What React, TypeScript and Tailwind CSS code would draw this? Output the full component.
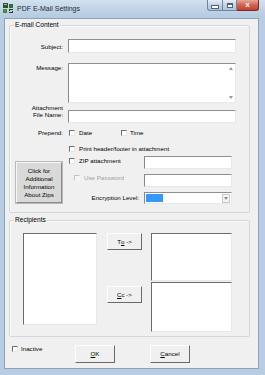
import React from "react";

const txt = "text-[6.2px] leading-[8px] text-black";
const field =
  "bg-white border border-t-[#8e8f8f] border-l-[#7f8a96] border-r-[#e3e9ef] border-b-[#e3e9ef]";
const sunken =
  "bg-white border border-t-[#6b6b6b] border-l-[#6b6b6b] border-r-[#e8e8e8] border-b-[#e8e8e8]";
const raised =
  "flex items-center justify-center bg-[#f0f0f0] border border-t-[#fdfdfd] border-l-[#fdfdfd] border-r-[#696969] border-b-[#696969] text-[6.2px] text-black";

function Check({ disabled = false }: { disabled?: boolean }) {
  return (
    <span
      className={`block h-[6px] w-[6px] shrink-0 border ${
        disabled
          ? "border-t-[#c4c4c4] border-l-[#c4c4c4] border-r-[#f4f4f4] border-b-[#f4f4f4] bg-[#f4f4f4]"
          : "border-t-[#6f6f6f] border-l-[#6f6f6f] border-r-[#e6e6e6] border-b-[#e6e6e6] bg-white"
      }`}
    />
  );
}

function Group({
  title,
  className,
  children,
}: {
  title: string;
  className: string;
  children: React.ReactNode;
}) {
  return (
    <div
      className={`relative rounded-[2px] border border-[#d2d8de] shadow-[inset_1px_1px_0_#fbfbfb] ${className}`}
    >
      {/* legend sits on the border line */}
      <span className="absolute left-[4px] top-[-5px] bg-[#f0f0f0] px-[1px] text-[6.6px] leading-[8px] text-black">
        {title}
      </span>
      {children}
    </div>
  );
}

function TitleBar() {
  return (
    <div className="flex h-[18px] items-start bg-[linear-gradient(180deg,#d3e1ee_0%,#c0d3e6_55%,#b5cae0_100%)]">
      <svg width="11" height="11" viewBox="0 0 11 11" className="ml-[3px] mt-[3px]">
        <rect x="0" y="0" width="5" height="5" fill="#3a4a3a" />
        <rect x="1" y="1" width="3" height="1" fill="#a6c86e" />
        <rect x="6" y="1" width="4" height="4" fill="#2f6f3a" />
        <rect x="0" y="6" width="4" height="4" fill="#4a8a3a" />
        <path d="M6 6h4v1H7v1h3v2H6V9h3V8H6z" fill="#2a3a2a" />
      </svg>
      <span className="ml-[3px] mt-[4px] font-['Liberation_Sans'] text-[7px] leading-[9px] text-[#1e2b38]">
        PDF E-Mail Settings
      </span>
      <div className="ml-auto mr-[6px] flex">
        <div className="flex h-[11px] w-[16px] items-center justify-center rounded-bl-[3px] border border-t-0 border-[#6d87a3] bg-[linear-gradient(180deg,#e4edf6,#c3d4e6_50%,#aec4dc)]">
          <span className="mt-[3px] block h-[2px] w-[6px] bg-white shadow-[0_0_0_1px_#4f647b]" />
        </div>
        <div className="flex h-[11px] w-[14px] items-center justify-center border border-l-0 border-t-0 border-[#6d87a3] bg-[linear-gradient(180deg,#e4edf6,#c3d4e6_50%,#aec4dc)]">
          <span className="block h-[5px] w-[6px] border border-t-2 border-[#4f647b] bg-white" />
        </div>
        <div className="flex h-[11px] w-[22px] items-center justify-center rounded-br-[3px] border border-l-0 border-t-0 border-[#7a2a22] bg-[linear-gradient(180deg,#e6a597,#d4624f_50%,#c2402e)]">
          <span className="text-[8px] font-bold leading-[8px] text-white">x</span>
        </div>
      </div>
    </div>
  );
}

export default function App() {
  return (
    <div className="flex h-[375px] w-[265px] flex-col bg-[#b8cde2] font-['Liberation_Sans',sans-serif]">
      <TitleBar />
      <div className="flex flex-1 pb-[6px] pl-[4px] pr-[6px]">
        <div className="flex flex-1 flex-col border border-[#8ba3bb] bg-[#f0f0f0]">
          {/* E-mail Content */}
          <Group title="E-mail Content" className="ml-[4px] mt-[6px] h-[188px] w-[241px]">
            <div className="flex flex-col pt-[13px]">
              <div className="flex">
                <span className={`${txt} w-[53px] pt-[4px] text-right`}>Subject:</span>
                <div className={`${field} ml-[5px] h-[14px] w-[168px]`} />
              </div>

              <div className="mt-[10px] flex">
                <span className={`${txt} w-[53px] pt-[1px] text-right`}>Message:</span>
                <div className={`${field} ml-[5px] flex h-[40px] w-[168px] justify-end`}>
                  <div className="flex w-[8px] flex-col items-center justify-between py-[3px]">
                    <svg width="4" height="3" viewBox="0 0 4 3">
                      <path d="M0 3L2 0L4 3z" fill="#9a9a9a" />
                    </svg>
                    <svg width="4" height="3" viewBox="0 0 4 3">
                      <path d="M0 0L2 3L4 0z" fill="#9a9a9a" />
                    </svg>
                  </div>
                </div>
              </div>

              <div className="mt-[1px] flex">
                <span className="w-[53px] text-right text-[6.2px] leading-[7px] text-black">
                  Attachment
                  <br />
                  File Name:
                </span>
                <div className={`${field} ml-[5px] mt-[6px] h-[13px] w-[168px]`} />
              </div>

              <div className="mt-[6px] flex h-[8px] items-center">
                <span className={`${txt} w-[53px] text-right`}>Prepend:</span>
                <div className="ml-[6px] flex items-center">
                  <Check />
                  <span className={`${txt} ml-[4px] w-[42px]`}>Date</span>
                  <Check />
                  <span className={`${txt} ml-[3px]`}>Time</span>
                </div>
              </div>

              <div className="ml-[59px] mt-[8px] flex h-[8px] items-center">
                <Check />
                <span className={`${txt} ml-[4px]`}>Print header/footer in attachment</span>
              </div>

              <div className="mt-[3px] flex">
                <div className="ml-[6px] mt-[6px] flex h-[41px] w-[46px] items-center justify-center border border-t-[#f6f6f6] border-l-[#f6f6f6] border-r-[#8a8a8a] border-b-[#8a8a8a] bg-[#d9d9d9] text-center text-[6.2px] leading-[8px] text-black shadow-[0_0_0_1px_#b9b9b9]">
                  Click for
                  <br />
                  Additional
                  <br />
                  Information
                  <br />
                  About Zips
                </div>
                <div className="ml-[6px] flex flex-col">
                  <div className="flex h-[13px]">
                    <div className="flex h-[8px] w-[76px] items-center pl-[1px] pt-[1px]">
                      <Check />
                      <span className={`${txt} ml-[4px]`}>ZIP attachment</span>
                    </div>
                    <div className={`${field} h-[13px] w-[88px]`} />
                  </div>
                  <div className="mt-[5px] flex h-[13px]">
                    <div className="flex h-[8px] w-[76px] items-center pl-[6px]">
                      <Check disabled />
                      <span className="ml-[4px] text-[6.2px] leading-[8px] text-[#a0a0a0]">
                        Use Password
                      </span>
                    </div>
                    <div className={`${field} h-[13px] w-[88px]`} />
                  </div>
                  <div className="mt-[5px] flex h-[12px] items-center">
                    <span className={`${txt} w-[71px] text-right`}>Encryption Level:</span>
                    <div className={`${field} ml-[5px] flex h-[12px] w-[88px] items-center`}>
                      <span className="ml-[1px] block h-[8px] w-[17px] bg-[#3399ff]" />
                      <div className="ml-auto mr-[1px] flex h-[9px] w-[8px] items-center justify-center border border-[#c9c9c9] bg-[#f4f4f4]">
                        <svg width="4" height="3" viewBox="0 0 4 3">
                          <path d="M0 0L2 3L4 0z" fill="#8a8a8a" />
                        </svg>
                      </div>
                    </div>
                  </div>
                </div>
              </div>
            </div>
          </Group>

          {/* Recipients */}
          <Group title="Recipients" className="ml-[4px] mt-[7px] h-[117px] w-[241px]">
            <div className="flex pl-[13px] pt-[12px]">
              <div className={`${sunken} h-[92px] w-[74px]`} />
              <div className="ml-[10px] flex w-[35px] flex-col">
                <button type="button" className={`${raised} h-[17px] w-[35px]`}>
                  T<span className="underline">o</span>&nbsp;-&gt;
                </button>
                <button type="button" className={`${raised} mt-[36px] h-[17px] w-[35px]`}>
                  <span className="underline">C</span>c&nbsp;-&gt;
                </button>
              </div>
              <div className="ml-[9px] flex flex-col">
                <div className={`${sunken} h-[48px] w-[81px]`} />
                <div className={`${sunken} mt-[1px] h-[50px] w-[81px]`} />
              </div>
            </div>
          </Group>

          {/* bottom buttons */}
          <div className="mt-[8px] flex items-start">
            <div className="flex w-[70px] items-center pl-[7px]">
              <Check />
              <span className={`${txt} ml-[3px]`}>Inactive</span>
            </div>
            <button type="button" className={`${raised} h-[18px] w-[40px]`}>
              <span className="underline">O</span>K
            </button>
            <button type="button" className={`${raised} ml-[35px] h-[18px] w-[40px]`}>
              <span className="underline">C</span>ancel
            </button>
          </div>
        </div>
      </div>
    </div>
  );
}
